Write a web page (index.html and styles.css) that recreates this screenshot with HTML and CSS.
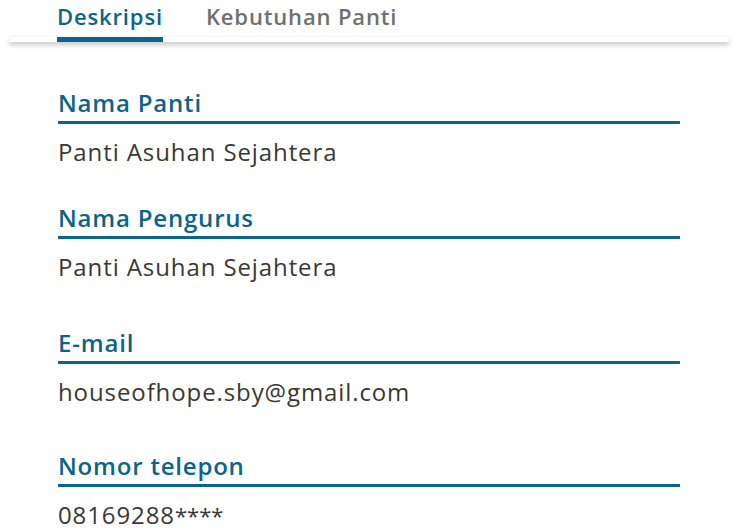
FILE: index.html
```html
<!DOCTYPE html>
<html lang="id">
<head>
<meta charset="utf-8">
<title>Deskripsi Panti</title>
<link rel="stylesheet" href="styles.css">
</head>
<body>
<div class="tabbar">
  <div class="tabs">
    <div class="tab active">Deskripsi</div>
    <div class="tab">Kebutuhan Panti</div>
  </div>
  <div class="track"></div>
</div>
<main class="content">
  <section class="field first">
    <h2 class="label">Nama Panti</h2>
    <p class="value">Panti Asuhan Sejahtera</p>
  </section>
  <section class="field">
    <h2 class="label">Nama Pengurus</h2>
    <p class="value">Panti Asuhan Sejahtera</p>
  </section>
  <section class="field third">
    <h2 class="label">E-mail</h2>
    <p class="value">houseofhope.sby@gmail.com</p>
  </section>
  <section class="field fourth">
    <h2 class="label">Nomor telepon</h2>
    <p class="value last">08169288<span class="mask">****</span></p>
  </section>
</main>
</body>
</html>
```
FILE: styles.css
```css
html, body {
  margin: 0;
  padding: 0;
  background: #ffffff;
}
body {
  font-family: "Open Sans", "Noto Sans", sans-serif;
}
.tabbar {
  margin: 0 9px;
}
.tabs {
  display: flex;
  gap: 43px;
  padding-left: 48px;
  position: relative;
  z-index: 1;
}
.tab {
  font-size: 22px;
  font-weight: 600;
  letter-spacing: 0.85px;
  color: #707070;
  line-height: 28px;
  padding-top: 2px;
  padding-bottom: 7px;
  border-bottom: 5px solid transparent;
}
.tab.active {
  color: #0b6489;
  border-bottom-color: #0b6489;
}
.track {
  height: 5px;
  margin-top: -5px;
  background: #ffffff;
  box-shadow: 0 3px 5px rgba(0, 0, 0, 0.22), 0 0 2px rgba(0, 0, 0, 0.08);
}
.content {
  padding: 0 58px;
}
.field {
  margin-top: 35px;
}
.field.first {
  margin-top: 46px;
}
.field.third {
  margin-top: 45px;
}
.field.fourth {
  margin-top: 43px;
}
.label {
  margin: 0;
  font-size: 24px;
  font-weight: 600;
  letter-spacing: 0.8px;
  color: #0b6489;
  line-height: 30px;
  padding-bottom: 3px;
  border-bottom: 3px solid #0b6489;
}
.value {
  margin: 0;
  padding-top: 12px;
  font-size: 24px;
  font-weight: 400;
  letter-spacing: 0.9px;
  color: #3a3833;
  line-height: 32px;
}
.value.last {
  line-height: 28px;
  padding-top: 14px;
}
.mask {
  letter-spacing: 0;
  font-size: 22px;
}
```
